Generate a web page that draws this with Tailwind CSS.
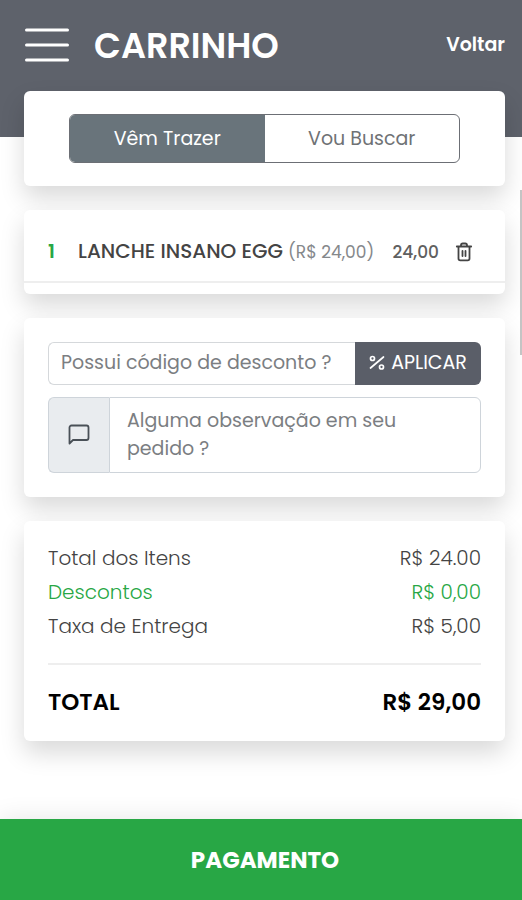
<!DOCTYPE html>
<html lang="pt-BR">
<head>
<meta charset="utf-8">
<meta name="viewport" content="width=device-width, initial-scale=1">
<title>Carrinho</title>
<script src="https://cdn.jsdelivr.net/npm/@tailwindcss/browser@4"></script>
</head>
<body class="flex min-h-screen flex-col overflow-x-hidden bg-white font-[Poppins,Inter,sans-serif] text-[19px] text-[#444]">
  <header class="flex h-[137px] items-start bg-[#5e626b] pr-[17px] pl-6 text-white">
    <div class="flex h-[90px] w-full items-center gap-6">
      <button type="button" aria-label="Abrir menu" class="shrink-0">
        <svg class="h-9 w-[46px]" viewBox="0 0 46 36" fill="none" stroke="currentColor" stroke-width="3" stroke-linecap="round" aria-hidden="true"><path d="M2.500 3h41M2.500 18h41M2.500 33h41"/></svg>
      </button>
      <h1 class="text-[35px] leading-none font-semibold">CARRINHO</h1>
      <a href="#" class="ml-auto font-semibold">Voltar</a>
    </div>
  </header>

  <main class="-mt-[46px] flex flex-1 flex-col gap-6 pr-[17px] pb-[78px] pl-6">
    <section class="rounded-md bg-white px-[45px] py-[23px] shadow-[0_12px_24px_rgba(0,0,0,0.15)]">
      <div role="radiogroup" aria-label="Forma de entrega" class="flex h-[49px] overflow-hidden rounded-md border border-[#6c6f75]">
        <label class="flex flex-1 items-center justify-center bg-[#69747b] pt-0.5 text-white"><input type="radio" name="entrega" class="sr-only" checked>Vêm Trazer</label>
        <label class="flex flex-1 items-center justify-center pt-0.5 text-[#6f7275]"><input type="radio" name="entrega" class="sr-only">Vou Buscar</label>
      </div>
    </section>

    <section class="rounded-md bg-white pb-[11px] shadow-[0_12px_24px_rgba(0,0,0,0.15)]">
      <div class="flex items-center border-b-2 border-[#eee] pt-7 pr-8 pb-4 pl-6 leading-[26px]">
        <span class="w-[30px] font-semibold text-[#28a745]">1</span>
        <span class="text-[20px] font-medium whitespace-nowrap">LANCHE INSANO EGG <span class="text-[17px] font-normal text-[#85888b]">(R$ 24,00)</span></span>
        <span class="ml-auto text-[17px] font-medium text-[#606060]">24,00</span>
        <button type="button" aria-label="Remover item" class="ml-4 text-[#444]">
          <svg class="h-5 w-[18px]" viewBox="0 0 18 20" fill="none" stroke="currentColor" stroke-width="1.800" stroke-linecap="round" stroke-linejoin="round" aria-hidden="true"><path d="M1.800 4.500h14.400M3.500 4.500v12a1.800 1.800 0 0 0 1.800 1.800h7.400a1.800 1.800 0 0 0 1.800-1.800v-12M6 4.500V3.300a1.800 1.800 0 0 1 1.800-1.800h2.400A1.800 1.800 0 0 1 12 3.300v1.200M7.500 9v5M10.500 9v5"/></svg>
        </button>
      </div>
    </section>

    <section class="flex flex-col gap-3 rounded-md bg-white p-6 shadow-[0_12px_24px_rgba(0,0,0,0.15)]">
      <form class="flex h-[43px]">
        <input type="text" aria-label="Código de desconto" placeholder="Possui código de desconto ?" class="min-w-0 flex-1 rounded-l-md border border-r-0 border-[#d5d8db] px-3 placeholder:text-[#7b7e82]">
        <button type="button" class="flex w-[126px] items-center justify-center gap-1.5 rounded-r-md bg-[#5a5e68] text-white">
          <svg class="size-4 -translate-y-px" viewBox="0 0 16 16" fill="none" stroke="currentColor" stroke-width="1.700" stroke-linecap="round" aria-hidden="true"><path d="M14.500 2 1.500 13"/><circle cx="3.500" cy="3.500" r="2"/><circle cx="12.500" cy="12" r="2"/></svg>
          APLICAR
        </button>
      </form>
      <div class="flex h-[76px]">
        <label for="obs" aria-label="Observação" class="flex w-[61px] items-center justify-center rounded-l-md border border-r-0 border-[#ced4da] bg-[#e9ecef] text-[#495057]">
          <svg class="size-[22px]" viewBox="0 0 22 22" fill="none" stroke="currentColor" stroke-width="1.800" stroke-linecap="round" stroke-linejoin="round" aria-hidden="true"><path d="M1.500 19.500V3.500a2 2 0 0 1 2-2h15a2 2 0 0 1 2 2v10.500a2 2 0 0 1-2 2H5z"/></svg>
        </label>
        <textarea id="obs" placeholder="Alguma observação em seu pedido ?" class="min-w-0 flex-1 resize-none overflow-hidden rounded-r-md border border-[#ced4da] py-[9px] pr-20 pl-[17px] leading-7 placeholder:text-[#7b7e82]"></textarea>
      </div>
    </section>

    <section class="rounded-md bg-white px-6 pt-5 pb-[22px] shadow-[0_12px_24px_rgba(0,0,0,0.15)]">
      <dl class="text-[20px] leading-[34px] font-light">
        <div class="flex justify-between"><dt>Total dos Itens</dt><dd>R$ 24.00</dd></div>
        <div class="flex justify-between text-[#28a745]"><dt>Descontos</dt><dd>R$ 0,00</dd></div>
        <div class="flex justify-between"><dt>Taxa de Entrega</dt><dd>R$ 5,00</dd></div>
        <div class="mt-5 flex justify-between border-t-2 border-[#eee] pt-5 text-[23px] font-semibold text-black"><dt>TOTAL</dt><dd>R$ 29,00</dd></div>
      </dl>
    </section>
  </main>

  <button type="button" class="h-[81px] w-full bg-[#28a745] pt-0.5 pl-2 text-[23px] font-bold text-white shadow-[0_0_24px_rgba(0,0,0,0.1)]">PAGAMENTO</button>
  <div class="absolute top-[190px] right-0 h-[165px] w-0.5 bg-[#c4c4c4]" aria-hidden="true"></div>
</body>
</html>
